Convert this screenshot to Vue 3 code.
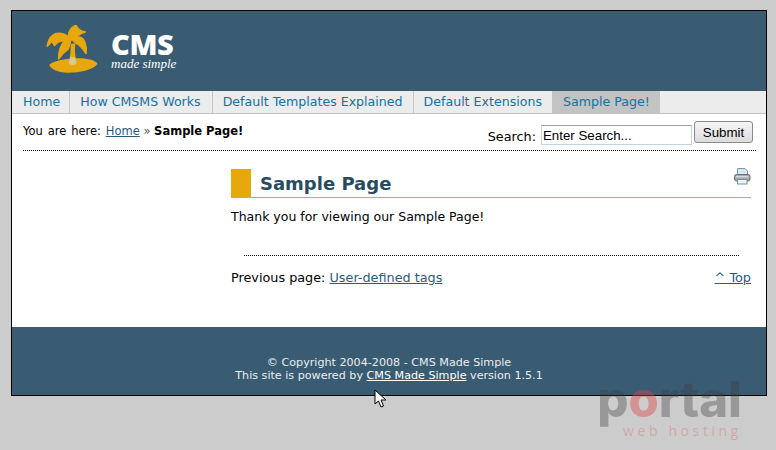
<template>
  <div class="screen">
    <div class="page">
      <header class="header">
        <div class="logo">
          <svg class="palm" width="54" height="50" viewBox="18 15 162 150">
            <path d="M28 134 C50 115 150 105 172 130 C170 150 90 168 50 152 C38 148 30 142 28 134 Z" fill="#e6a80c" />
            <path d="M92 72 C92 95 90 115 86 130 C92 137 104 137 110 130 C106 112 104 95 106 70 Z" fill="#e6a80c" />
            <path d="M90 112 C89 120 88 125 86 130 C92 137 104 137 110 130 C108 124 107 118 106 112 Z" fill="#d8c79a" />
            <g fill="#e6a80c" stroke="#e6a80c" stroke-width="5" stroke-linejoin="round">
              <path d="M92 58 C78 40 52 34 38 46 C30 52 24 62 22 78 C28 74 30 70 36 62 C38 70 40 72 44 76 C50 66 60 62 76 62 Z" />
              <path d="M76 60 C64 72 56 90 56 116 C66 102 72 96 84 88 C88 78 90 70 92 60 Z" />
              <path d="M86 56 C84 36 92 22 108 16 C112 26 122 34 136 36 C120 40 108 48 100 60 Z" />
              <path d="M96 58 C110 46 128 50 134 66 C138 76 140 88 138 100 C130 88 122 74 106 68 Z" />
            </g>
          </svg>
          <div class="logo-text">
            <div class="logo-cms">CMS</div>
            <div class="logo-sub">made simple</div>
          </div>
        </div>
      </header>

      <nav class="nav">
        <a v-for="item in menu" :key="item" class="nav-item" :class="{ current: item === 'Sample Page!' }">{{ item }}</a>
      </nav>

      <div class="crumbs">
        <div class="trail">
          <span class="here">You are here: </span><a class="link">Home</a> <span class="sep">»</span> <strong>Sample Page!</strong>
        </div>
        <form class="search" @submit.prevent>
          <label>Search:</label>
          <input type="text" value="Enter Search..." />
          <button type="submit">Submit</button>
        </form>
      </div>

      <main class="main">
        <div class="title-row">
          <span class="square"></span>
          <h2>Sample Page</h2>
          <svg class="printer" width="17" height="17" viewBox="0 0 17 17">
            <path d="M3.5 .5 H11 L13.5 3 V8 H3.5 Z" fill="#dbe6f3" stroke="#7b93b5" />
            <rect x=".5" y="6.5" width="15.5" height="6.5" rx="2" fill="#a5a8ab" stroke="#6d7073" />
            <rect x="2" y="8" width="12.5" height="1.5" fill="#d4d6d8" />
            <rect x="3.5" y="11.5" width="9.5" height="4.5" fill="#eef3f9" stroke="#6f8fbd" />
          </svg>
        </div>
        <p class="thanks">Thank you for viewing our Sample Page!</p>
        <div class="rule"></div>
        <div class="pager">
          <span>Previous page: <a class="link">User-defined tags</a></span>
          <a class="link">^ Top</a>
        </div>
      </main>

      <footer class="footer">
        <div>© Copyright 2004-2008 - CMS Made Simple</div>
        <div>This site is powered by <a class="foot-link">CMS Made Simple</a> version 1.5.1</div>
      </footer>
    </div>

    <!-- mouse pointer from the recording -->
    <svg class="cursor" width="14" height="20" viewBox="0 0 14 20">
      <path d="M1 1 V15 L4.5 12 L7 18 L9.5 17 L7 11 H12 Z" fill="#fff" stroke="#000" stroke-width="1" />
    </svg>

    <!-- watermark -->
    <div class="mark">
      <div class="mark-top">p<span>o</span>rtal</div>
      <div class="mark-sub">web hosting</div>
    </div>
  </div>
</template>

<script setup>
const menu = [
  'Home',
  'How CMSMS Works',
  'Default Templates Explained',
  'Default Extensions',
  'Sample Page!'
]
</script>

<style>
body {
  margin: 0;
  background: #cccccc;
}
</style>

<style scoped>
.screen {
  position: relative;
  width: 776px;
  height: 450px;
  overflow: hidden;
  padding: 10px 0 0 11px;
  box-sizing: border-box;
  font-family: "DejaVu Sans", Verdana, sans-serif;
  color: #000;
}

.page {
  width: 754px;
  border: 1px solid #000;
  background: #fff;
}

.header {
  height: 80px;
  background: #3a5c72;
  display: flex;
  align-items: flex-start;
}

.logo {
  display: flex;
  margin: 14px 0 0 34px;
}

.logo-text {
  margin: 5px 0 0 11px;
  color: #fff;
}

.logo-cms {
  font-family: "Open Sans", "DejaVu Sans", sans-serif;
  font-size: 29px;
  font-weight: 800;
  line-height: 27px;
  letter-spacing: -0.4px;
}

.logo-sub {
  font-family: "Liberation Serif", serif;
  font-style: italic;
  font-size: 13px;
  line-height: 13px;
}

.nav {
  display: flex;
  height: 22px;
  background: #ececec;
  border-bottom: 1px solid #c3c3c3;
}

.nav-item {
  padding: 0 10px;
  line-height: 22px;
  font-size: 12.6px;
  color: #18719e;
  border-right: 1px solid #c3c3c3;
}

.nav-item:first-child {
  padding: 0 9px 0 11px;
}

.nav-item:nth-child(2) {
  padding-right: 11px;
}

.nav-item.current {
  background: #c3c3c3;
  border-right: 0;
}

.crumbs {
  height: 37px;
  margin: 0 10px 0 11px;
  border-bottom: 1px dotted #000;
  display: flex;
  justify-content: space-between;
  box-sizing: border-box;
}

.trail {
  font-size: 11.5px;
  margin-top: 10px;
}

.here {
  word-spacing: 1.2px;
}

.sep {
  color: #555;
}

.link {
  color: #2a5a7c;
  text-decoration: underline;
}

.search {
  display: flex;
  align-items: flex-start;
  margin: 7px 3px 0 0;
}

.search label {
  font-size: 12.8px;
  margin: 8px 5px 0 0;
}

.search input {
  width: 151px;
  height: 20px;
  margin-top: 4px;
  padding: 0 1px;
  box-sizing: border-box;
  border: 1px solid #c8d2dd;
  border-top-color: #a0a0a0;
  font-family: "Liberation Sans", Arial, sans-serif;
  font-size: 13.3px;
  color: #000;
  background: #fff;
  outline: none;
}

.search button {
  width: 59px;
  height: 22px;
  margin-left: 2px;
  padding: 0;
  border: 1px solid #8a8a8a;
  border-radius: 3px;
  background: linear-gradient(#f6f6f6, #dcdcdc);
  font-family: "Liberation Sans", Arial, sans-serif;
  font-size: 13.3px;
  color: #000;
}

.main {
  margin: 18px 15px 0 219px;
  height: 158px;
}

.title-row {
  position: relative;
  display: flex;
  align-items: center;
  height: 28px;
  border-bottom: 1px solid #e6a80c;
}

.square {
  width: 20px;
  height: 28px;
  background: #e6a80c;
}

.title-row h2 {
  margin: 0 0 0 9px;
  font-size: 18px;
  font-weight: bold;
  color: #294b5f;
}

.printer {
  position: absolute;
  right: 0;
  top: -1px;
}

.thanks {
  margin: 11px 0 0;
  font-size: 12.5px;
  line-height: 16px;
}

.rule {
  margin: 30px 12px 0 13px;
  border-top: 1px dotted #000;
}

.pager {
  display: flex;
  justify-content: space-between;
  margin-top: 14px;
  font-size: 12.8px;
  line-height: 16px;
}

.footer {
  height: 68px;
  box-sizing: border-box;
  padding-top: 29px;
  background: #3a5c72;
  color: #e8edf0;
  font-size: 11.15px;
  line-height: 13px;
  text-align: center;
}

.foot-link {
  color: #fff;
  text-decoration: underline;
}

.cursor {
  position: absolute;
  left: 374px;
  top: 389px;
}

.mark {
  position: absolute;
  left: 596px;
  top: 376px;
  width: 146px;
  text-align: right;
  pointer-events: none;
}

.mark-top {
  font-family: Inter, sans-serif;
  font-weight: 800;
  font-size: 49px;
  line-height: 47px;
  color: rgba(60, 60, 60, 0.36);
}

.mark-top span {
  color: rgba(225, 70, 70, 0.42);
}

.mark-sub {
  font-family: "Open Sans", sans-serif;
  font-size: 14px;
  line-height: 16px;
  letter-spacing: 3.6px;
  color: rgba(225, 90, 90, 0.34);
}
</style>
